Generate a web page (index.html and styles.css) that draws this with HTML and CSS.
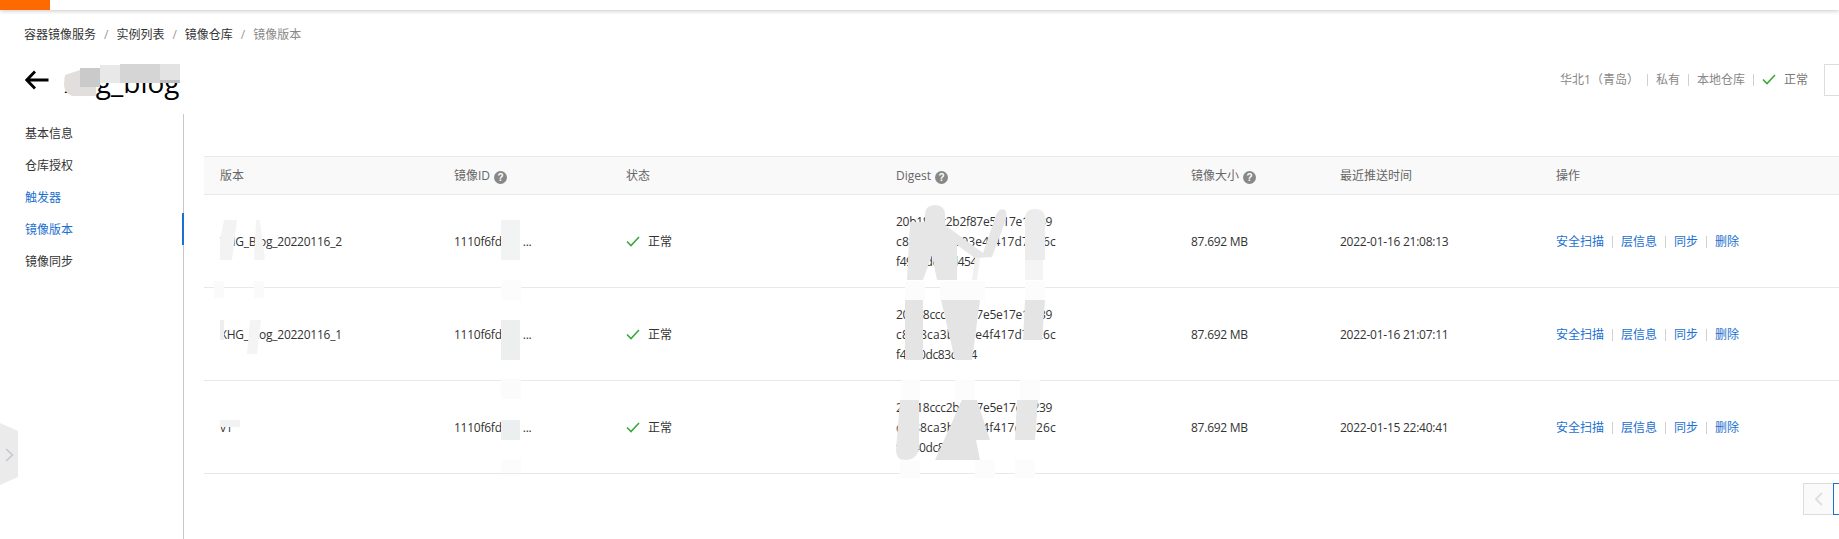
FILE: index.html
```html
<!DOCTYPE html>
<html lang="zh-CN">
<head>
<meta charset="utf-8">
<title>镜像版本</title>
<link rel="stylesheet" href="styles.css">
</head>
<body>
<div class="topbar"><div class="logo"></div></div>
<nav class="crumbs">
  <a>容器镜像服务</a><i>/</i><a>实例列表</a><i>/</i><a>镜像仓库</a><i>/</i><span>镜像版本</span>
</nav>
<header class="head">
  <div class="title-wrap">
    <svg class="back" width="24" height="20" viewBox="0 0 24 20"><path d="M23.500 10H2.500M10 1.500 1.800 10l8.200 8.500" fill="none" stroke="#000" stroke-width="2.800"/></svg>
    <h1>xhg_blog</h1>
  </div>
  <div class="meta">
    <span>华北1（青岛）</span><b></b><span>私有</span><b></b><span>本地仓库</span><b></b>
    <svg class="check" width="14" height="11" viewBox="0 0 14 11"><path d="M1 5.500 5 9.500 13 1" fill="none" stroke="#3aa83a" stroke-width="1.600"/></svg>
    <span class="ok">正常</span>
    <div class="box"></div>
  </div>
</header>
<div class="body">
  <aside class="side">
    <a>基本信息</a>
    <a>仓库授权</a>
    <a class="blue">触发器</a>
    <a class="blue current">镜像版本</a>
    <a>镜像同步</a>
  </aside>
  <main class="main">
    <table class="grid">
      <colgroup><col class="c1"><col class="c2"><col class="c3"><col class="c4"><col class="c5"><col class="c6"><col></colgroup>
      <thead>
        <tr>
          <th>版本</th>
          <th>镜像ID<em>?</em></th>
          <th>状态</th>
          <th>Digest<em>?</em></th>
          <th>镜像大小<em>?</em></th>
          <th>最近推送时间</th>
          <th>操作</th>
        </tr>
      </thead>
      <tbody>
        <tr>
          <td>XHG_Blog_20220116_2</td>
          <td>1110f6fd<span class="gap"></span>...</td>
          <td><svg class="check" width="14" height="11" viewBox="0 0 14 11"><path d="M1 5.500 5 9.500 13 1" fill="none" stroke="#3aa83a" stroke-width="1.600"/></svg><span class="ok">正常</span></td>
          <td><span class="dg">20b18ccc2b2f87e5e17e1f239</span><span class="dg">c8f88ca3b303e4f417d7526c</span><span class="dg">f4940dc83d454</span></td>
          <td>87.692 MB</td>
          <td>2022-01-16 21:08:13</td>
          <td class="ops"><a>安全扫描</a><b></b><a>层信息</a><b></b><a>同步</a><b></b><a>删除</a></td>
        </tr>
        <tr>
          <td>XHG_Blog_20220116_1</td>
          <td>1110f6fd<span class="gap"></span>...</td>
          <td><svg class="check" width="14" height="11" viewBox="0 0 14 11"><path d="M1 5.500 5 9.500 13 1" fill="none" stroke="#3aa83a" stroke-width="1.600"/></svg><span class="ok">正常</span></td>
          <td><span class="dg">20b18ccc2b2f87e5e17e1f239</span><span class="dg">c8f88ca3b303e4f417d7526c</span><span class="dg">f4940dc83d454</span></td>
          <td>87.692 MB</td>
          <td>2022-01-16 21:07:11</td>
          <td class="ops"><a>安全扫描</a><b></b><a>层信息</a><b></b><a>同步</a><b></b><a>删除</a></td>
        </tr>
        <tr>
          <td>v1</td>
          <td>1110f6fd<span class="gap"></span>...</td>
          <td><svg class="check" width="14" height="11" viewBox="0 0 14 11"><path d="M1 5.500 5 9.500 13 1" fill="none" stroke="#3aa83a" stroke-width="1.600"/></svg><span class="ok">正常</span></td>
          <td><span class="dg">20b18ccc2b2f87e5e17e1f239</span><span class="dg">c8f88ca3b303e4f417d7526c</span><span class="dg">f4940dc83d45</span></td>
          <td>87.692 MB</td>
          <td>2022-01-15 22:40:41</td>
          <td class="ops"><a>安全扫描</a><b></b><a>层信息</a><b></b><a>同步</a><b></b><a>删除</a></td>
        </tr>
      </tbody>
    </table>
    <div class="pager">
      <button class="prev"><svg width="8" height="14" viewBox="0 0 8 14"><path d="M7 1 1 7l6 6" fill="none" stroke="#e0e0e0" stroke-width="2"/></svg></button>
      <button class="page"></button>
    </div>
  </main>
</div>
<svg class="toggle" width="18" height="62" viewBox="0 0 18 62"><path d="M0 0 18 8V54L0 62Z" fill="#ebebeb"/><path d="M6 26l6.500 6-6.500 6" fill="none" stroke="#c4c6cf" stroke-width="1.500"/></svg>
<svg class="mask" width="1839" height="539" viewBox="0 0 1839 539">
  <!-- title -->
  <path d="M65 75 80 70V87H96V96H72Q64 93 64 84Z" fill="#e0dfde"/>
  <rect x="80" y="68" width="20" height="19" fill="#cbcaca"/>
  <rect x="100" y="65" width="20" height="18" fill="#e8e8e8"/>
  <rect x="120" y="64" width="40" height="19" fill="#d6d5d6"/>
  <rect x="160" y="64" width="20" height="16" fill="#e3e3e4"/>
  <rect x="160" y="80" width="20" height="3" fill="#bdbdbd"/>
  <!-- version -->
  <path d="M224 220 237 220 232 260H220V240Z" fill="#f3f3f3"/>
  <path d="M256 220 260 220 265 260H254Z" fill="#f4f4f4"/>
  <path d="M214 281H224V298H214Z M254 281H264V298H254Z" fill="#fafafa"/>
  <rect x="220" y="320" width="4" height="20" fill="#eeeeee"/>
  <path d="M250 320H261L257 354H247Z" fill="#f4f4f4"/>
  <rect x="220" y="420" width="20" height="7" fill="#f2f2f2"/>
  <!-- image id -->
  <rect x="501" y="220" width="19" height="40" fill="#f2f3f3"/>
  <rect x="501" y="280" width="20" height="20" fill="#fcfcfc"/>
  <rect x="501" y="320" width="19" height="40" fill="#edefef"/>
  <rect x="501" y="379" width="20" height="20" fill="#fbfbfb"/>
  <rect x="501" y="420" width="19" height="20" fill="#ecefef"/>
  <rect x="501" y="460" width="20" height="13" fill="#fcfcfc"/>
  <!-- digest row 1 -->
  <path d="M907 280 910 222 925 222V215Q925 205 935 205 945 205 945 215V225L983 253 996 215Q1000 207 1005 210 1008 213 1005 222L992 257 975 258 957 245 957 280H937L932 255 923 280Z" fill="#e6e6e6"/>
  <path d="M975 258H980L977 280H972Z" fill="#f1f1f1"/>
  <path d="M1025 260V218Q1025 209 1035 209 1045 209 1045 218V260Z" fill="#ececec"/>
  <rect x="1025" y="260" width="18" height="20" fill="#f4f4f4"/>
  <!-- digest row 2 -->
  <path d="M905 300H923V360H905Z M941 300H980L972 360H955Z M1025 300H1045L1042 340H1023Z" fill="#e4e4e4"/>
  <!-- digest row 3 -->
  <path d="M900 400H919V448Q917 460 905 460 896 460 896 450Z" fill="#e6e6e6"/>
  <path d="M962 400H977L990 440H976L980 460H935Z" fill="#e3e3e3"/>
  <path d="M1017 400H1038L1035 440H1015Z" fill="#e6e6e6"/>
  <!-- digest fades -->
  <path d="M905 281H925V300H905Z M940 281H985V300H940Z M1025 281H1045V300H1025Z M902 380H920V400H902Z M955 380H975V400H955Z M1020 380H1040V400H1020Z M900 460H920V478H900Z M975 460H995V478H975Z M1015 460H1035V478H1015Z" fill="#fcfcfc"/>
</svg>
</body>
</html>
```
FILE: styles.css
```css
* { box-sizing: border-box; }
html, body { margin: 0; height: 539px; overflow: hidden; background: #fff; }
body {
  position: relative;
  font: 12px/20px "Open Sans", "Noto Sans CJK SC", sans-serif;
  color: #333;
  display: flex;
  flex-direction: column;
}
.topbar { height: 10px; background: #fff; box-shadow: 0 1px 4px rgba(0,0,0,.22); flex: none; }
.logo { width: 50px; height: 10px; background: #ff6a00; }
.crumbs { flex: none; height: 20px; margin-top: 15px; padding-left: 24px; display: flex; align-items: center; }
.crumbs i { font-style: normal; color: #999; margin: 0 8px; }
.crumbs span { color: #888; }
.head { flex: none; height: 69px; padding-left: 25px; display: flex; justify-content: space-between; align-items: center; }
.title-wrap { display: flex; align-items: center; }
.back { flex: none; }
h1 { margin: 0 0 0 15px; padding-top: 4px; font: 400 28px/32px "Open Sans", sans-serif; color: #000; }
.meta { display: flex; align-items: center; color: #888; height: 32px; }
.meta b { width: 1px; height: 12px; background: #d0d0d0; margin: 0 8px; }
.meta .check { margin-right: 8px; }
.meta .ok { color: #777; }
.meta .box { width: 15px; height: 32px; margin-left: 16px; border: 1px solid #ddd; border-right: 0; }
.body { flex: 1; display: flex; min-height: 0; }
.side { flex: none; width: 184px; border-right: 1px solid #c8c8c8; padding: 3px 0 0 25px; position: relative; }
.side a { display: block; height: 32px; line-height: 34px; color: #333; }
.side a.blue { color: #1b6fd0; }
.side a.current::after { content: ""; position: absolute; right: -1px; width: 2px; height: 32px; background: #1b6fd0; }
.main { flex: 1; min-width: 0; padding: 42px 0 0 20px; }
.grid { width: 1635px; border-collapse: collapse; table-layout: fixed; }
.c1 { width: 234px; } .c2 { width: 172px; } .c3 { width: 270px; } .c4 { width: 295px; } .c5 { width: 149px; } .c6 { width: 216px; }
th { height: 38px; padding: 0 16px; background: #f9f9f9; border-top: 1px solid #e8e8e8; border-bottom: 1px solid #e8e8e8; font-weight: 400; text-align: left; color: #666; }
th em { display: inline-block; width: 13px; height: 13px; border-radius: 50%; background: #888; color: #fff; font: 700 10px/13px "Liberation Sans", sans-serif; text-align: center; margin-left: 4px; vertical-align: -1px; }
td { height: 93px; padding: 2px 16px 0; border-bottom: 1px solid #e8e8e8; vertical-align: middle; letter-spacing: -.25px; }
td .check { margin-right: 8px; vertical-align: -1px; }
td .ok { letter-spacing: 0; }
.gap { display: inline-block; width: 21px; }
.dg { display: block; letter-spacing: -.28px; }
.dg:nth-child(2) { letter-spacing: .15px; }
.dg:nth-child(3) { letter-spacing: -.4px; }
.ops { white-space: nowrap; letter-spacing: 0; }
.ops a { color: #1b6fd0; }
.ops b { display: inline-block; width: 1px; height: 12px; background: #d0d0d0; margin: 0 8px; vertical-align: -2px; }
.pager { display: flex; justify-content: flex-end; margin-top: 9px; }
.pager button { height: 32px; padding: 0; background: #fafafa; border: 1px solid #ddd; display: flex; align-items: center; justify-content: center; }
.prev { width: 31px; flex: none; }
.page { width: 6px; flex: none; background: #fff !important; border: 1px solid #1b6fd0 !important; border-right: 0 !important; margin-left: -1px; }
.toggle { position: absolute; left: 0; top: 423px; }
.mask { position: absolute; left: 0; top: 0; pointer-events: none; }
```
